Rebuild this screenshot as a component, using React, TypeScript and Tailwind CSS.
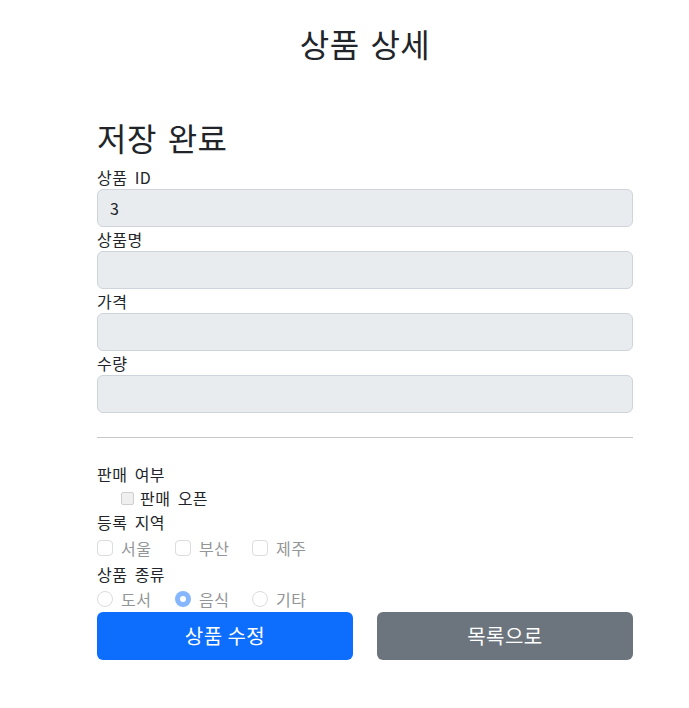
export default function App() {
  const fields = [
    { label: "상품 ID", value: "3" },
    { label: "상품명", value: "" },
    { label: "가격", value: "" },
    { label: "수량", value: "" },
  ];
  const regions = [
    { name: "서울", w: "w-[78px]" },
    { name: "부산", w: "w-[77px]" },
    { name: "제주", w: "w-[77px]" },
  ];
  const types = [
    { name: "도서", w: "w-[78px]", checked: false },
    { name: "음식", w: "w-[77px]", checked: true },
    { name: "기타", w: "w-[77px]", checked: false },
  ];

  return (
    <div className="min-h-screen bg-white text-[#212529] font-['Noto_Sans_CJK_KR','Noto_Sans',sans-serif] tracking-[0.03em] [word-spacing:0.2em]">
      <div className="ml-[97px] w-[536px]">
        <h2 className="pt-[24px] text-center text-[32px] leading-[38px]">상품 상세</h2>

        <h2 className="mt-[56px] mb-[9px] text-[32px] leading-[38px]">저장 완료</h2>

        {fields.map((f) => (
          <div key={f.label}>
            <label className="block text-[16px] leading-[24px]">{f.label}</label>
            <div className="flex h-[38px] items-center rounded-[6px] border border-[#ced4da] bg-[#e9ecef] px-3 text-[16px]">
              {f.value}
            </div>
          </div>
        ))}

        <hr className="my-6 border-t border-[#c8c8c8]" />

        <div className="text-[16px] leading-[24px]">판매 여부</div>
        <div className="flex h-[24px] items-center gap-[6px] pl-6">
          <span className="h-[13px] w-[13px] rounded-[2px] border border-[#cfcfcf] bg-[#efefef]" />
          <span className="text-[16px] leading-[24px]">판매 오픈</span>
        </div>

        <div className="text-[16px] leading-[24px]">등록 지역</div>
        <div className="flex h-[28px] items-center">
          {regions.map((r) => (
            <div key={r.name} className={`flex items-center gap-2 ${r.w}`}>
              <span className="h-4 w-4 rounded-[4px] border border-[#dadcdf] bg-white" />
              <span className="text-[16px] leading-[24px] text-[#939597]">{r.name}</span>
            </div>
          ))}
        </div>

        <div className="text-[16px] leading-[24px]">상품 종류</div>
        <div className="flex h-[26px] items-center">
          {types.map((t) => (
            <div key={t.name} className={`flex items-center gap-2 ${t.w}`}>
              {t.checked ? (
                <span className="flex h-4 w-4 items-center justify-center rounded-full bg-[#86b7fe]">
                  <span className="h-[6px] w-[6px] rounded-full bg-white" />
                </span>
              ) : (
                <span className="h-4 w-4 rounded-full border border-[#dadcdf] bg-white" />
              )}
              <span className="text-[16px] leading-[24px] text-[#939597]">{t.name}</span>
            </div>
          ))}
        </div>

        <div className="grid grid-cols-2 gap-6">
          <button className="h-[48px] rounded-[6px] bg-[#0d6efd] text-[20px] text-white">상품 수정</button>
          <button className="h-[48px] rounded-[6px] bg-[#6c757d] text-[20px] text-white">목록으로</button>
        </div>
      </div>
    </div>
  );
}
